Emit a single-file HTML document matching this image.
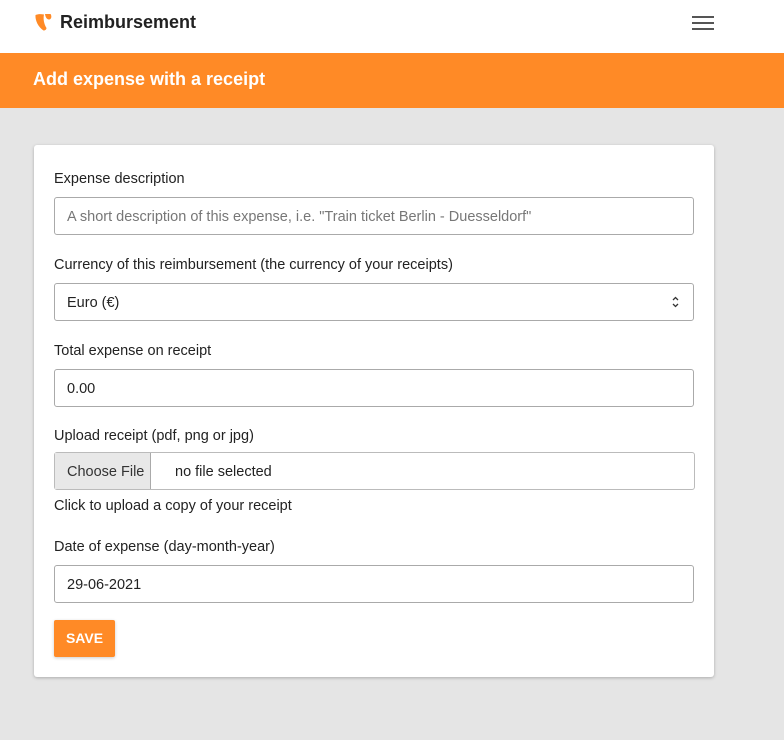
<!DOCTYPE html>
<html><head><meta charset="utf-8"><style>
*{box-sizing:border-box;margin:0;padding:0}
body{width:784px;height:740px;background:#e5e5e5;font-family:"Liberation Sans",sans-serif;color:#1a1a1a;position:relative;overflow:hidden}
.top{position:absolute;left:0;top:0;width:784px;height:53px;background:#fff}
.brand{position:absolute;left:60px;top:12px;font-size:18px;font-weight:bold;color:#222}
.logo{position:absolute;left:35px;top:13px}
.ham{position:absolute;left:692px;top:16px;width:22px}
.ham i{display:block;height:2px;background:#555;margin-bottom:4px}
.bar{position:absolute;left:0;top:53px;width:784px;height:55px;background:#ff8a26;color:#fff;font-weight:bold;font-size:18px;padding:16px 0 0 33px}
.card{position:absolute;left:34px;top:145px;width:680px;height:532px;background:#fff;border-radius:3px;box-shadow:0 1px 3px rgba(0,0,0,.25)}
.l{position:absolute;left:20px;font-size:14.5px;color:#222;margin-top:1px}
.in{position:absolute;left:20px;width:640px;height:38px;border:1px solid #aaa;border-radius:3px;font-size:14.5px;padding:11px 12px 0;color:#222;white-space:nowrap}
.ph{color:#777}
.fb{position:absolute;left:0;top:0;bottom:0;width:96px;background:#e8e8e8;border-right:1px solid #aaa;padding:11px 12px 0;color:#333;white-space:nowrap}
.save{position:absolute;left:20px;top:475px;width:61px;height:37px;background:#ff8a26;color:#fff;font-weight:bold;font-size:14px;border-radius:2px;text-align:center;line-height:37px;box-shadow:0 1px 3px rgba(0,0,0,.2)}
</style></head><body>
<div class="top">
<svg class="logo" width="17" height="18" viewBox="0 0 17 18"><path d="M0.5 2 C0 7 3 14 8.5 17.5 C10 17.5 11.5 16.5 11.5 15 C9 11 8 6 9 1.5 C6 1 3 1 0.5 2Z M10 1 L15.5 1 C17 3 16.5 6.5 14 6.5 C12 6.5 10.5 4.5 10 1Z" fill="#ff8a26"/></svg>
<div class="brand">Reimbursement</div>
<div class="ham"><i></i><i></i><i></i></div>
</div>
<div class="bar">Add expense with a receipt</div>
<div class="card">
<div class="l" style="top:25px">Expense description</div>
<div class="in" style="top:52px"><span class="ph">A short description of this expense, i.e. "Train ticket Berlin - Duesseldorf"</span></div>
<div class="l" style="top:111px">Currency of this reimbursement (the currency of your receipts)</div>
<div class="in" style="top:138px">Euro (€)<svg style="position:absolute;right:14px;top:12px" width="7" height="12" viewBox="0 0 7 12"><path d="M1 4 L3.5 1.5 L6 4 M1 8 L3.5 10.5 L6 8" fill="none" stroke="#333" stroke-width="1.3"/></svg></div>
<div class="l" style="top:197px">Total expense on receipt</div>
<div class="in" style="top:224px">0.00</div>
<div class="l" style="top:282px">Upload receipt (pdf, png or jpg)</div>
<div class="in" style="top:307px;width:641px;padding-left:120px;border-color:#bbb"><div class="fb">Choose File</div>no file selected</div>
<div class="l" style="top:352px">Click to upload a copy of your receipt</div>
<div class="l" style="top:393px">Date of expense (day-month-year)</div>
<div class="in" style="top:420px">29-06-2021</div>
<div class="save">SAVE</div>
</div>
</body></html>
